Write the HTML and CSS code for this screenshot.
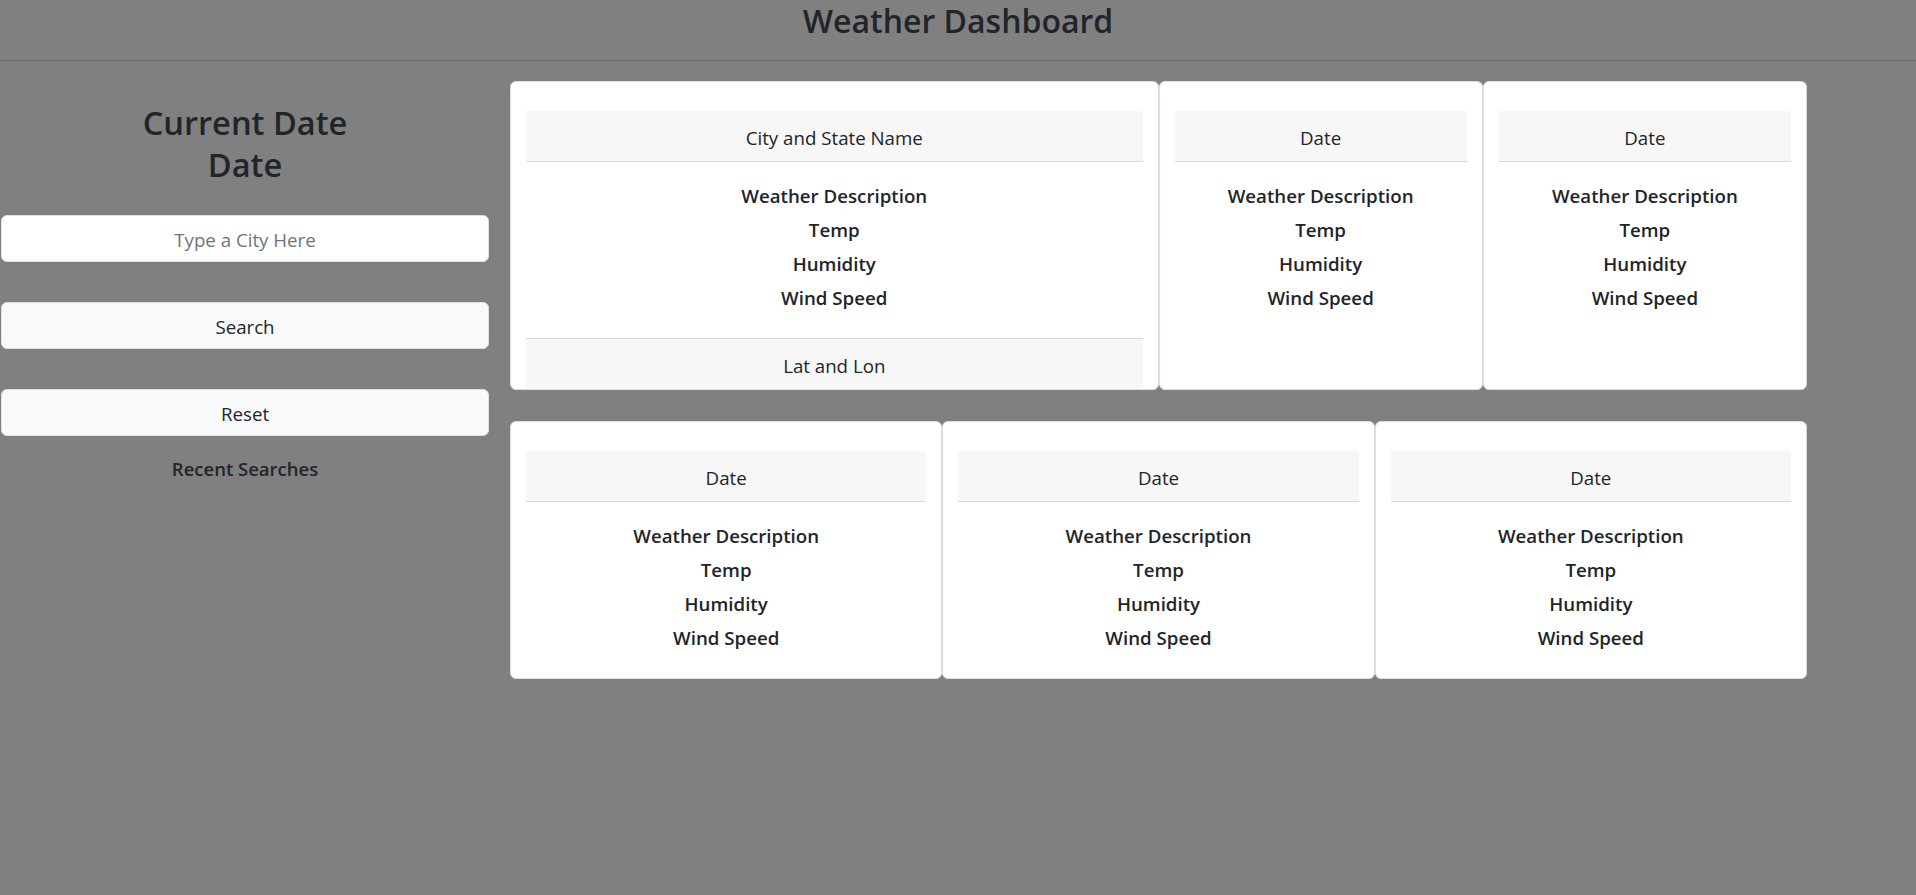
FILE: index.html
```html
<!DOCTYPE html>
<html lang="en">
<head>
<meta charset="utf-8">
<title>Weather Dashboard</title>
<link rel="stylesheet" href="styles.css">
</head>
<body>
<header class="topbar">
  <h1 class="title">Weather Dashboard</h1>
</header>
<main class="layout">
  <aside class="sidebar">
    <h2 class="date-heading"><span>Current Date</span><span>Date</span></h2>
    <input class="city-input" type="text" placeholder="Type a City Here">
    <button class="side-btn" type="button">Search</button>
    <button class="side-btn" type="button">Reset</button>
    <p class="recent">Recent Searches</p>
  </aside>
  <section class="cards">
    <div class="card-row card-row-top">
      <div class="card card-wide">
        <div class="card-head">City and State Name</div>
        <div class="card-body">
          <p class="stat">Weather Description</p>
          <p class="stat">Temp</p>
          <p class="stat">Humidity</p>
          <p class="stat">Wind Speed</p>
        </div>
        <div class="card-foot">Lat and Lon</div>
      </div>
      <div class="card">
        <div class="card-head">Date</div>
        <div class="card-body">
          <p class="stat">Weather Description</p>
          <p class="stat">Temp</p>
          <p class="stat">Humidity</p>
          <p class="stat">Wind Speed</p>
        </div>
      </div>
      <div class="card">
        <div class="card-head">Date</div>
        <div class="card-body">
          <p class="stat">Weather Description</p>
          <p class="stat">Temp</p>
          <p class="stat">Humidity</p>
          <p class="stat">Wind Speed</p>
        </div>
      </div>
    </div>
    <div class="card-row card-row-bottom">
      <div class="card">
        <div class="card-head">Date</div>
        <div class="card-body">
          <p class="stat">Weather Description</p>
          <p class="stat">Temp</p>
          <p class="stat">Humidity</p>
          <p class="stat">Wind Speed</p>
        </div>
      </div>
      <div class="card">
        <div class="card-head">Date</div>
        <div class="card-body">
          <p class="stat">Weather Description</p>
          <p class="stat">Temp</p>
          <p class="stat">Humidity</p>
          <p class="stat">Wind Speed</p>
        </div>
      </div>
      <div class="card">
        <div class="card-head">Date</div>
        <div class="card-body">
          <p class="stat">Weather Description</p>
          <p class="stat">Temp</p>
          <p class="stat">Humidity</p>
          <p class="stat">Wind Speed</p>
        </div>
      </div>
    </div>
  </section>
</main>
</body>
</html>
```

FILE: styles.css
```css
* {
  box-sizing: border-box;
}

html, body {
  margin: 0;
  padding: 0;
}

body {
  background: #808080;
  color: #212529;
  font-family: "Open Sans", "Noto Sans", "Liberation Sans", sans-serif;
  font-size: 18.7px;
  line-height: 24px;
  min-height: 895px;
}

.topbar {
  height: 61px;
  border-bottom: 1px solid #6a6a6a;
  text-align: center;
}

.title {
  margin: 0;
  font-size: 32px;
  line-height: 42px;
  font-weight: 600;
}

.layout {
  display: flex;
  align-items: flex-start;
}

.sidebar {
  width: 490px;
  flex: none;
  display: flex;
  flex-direction: column;
  align-items: center;
}

.date-heading {
  margin: 41px 0 0;
  font-size: 32.6px;
  line-height: 42px;
  font-weight: 600;
  display: flex;
  flex-direction: column;
  align-items: center;
}

.city-input {
  margin-top: 29px;
  width: 488px;
  height: 47px;
  border: 1px solid #dee2e6;
  border-radius: 6px;
  background: #fff;
  font-family: inherit;
  font-size: 18.7px;
  color: #212529;
  text-align: center;
  padding: 2px 12px 0;
  outline: none;
}

.city-input::placeholder {
  color: #6c757d;
  opacity: 1;
}

.side-btn {
  margin-top: 40px;
  width: 488px;
  height: 47px;
  border: 1px solid #dde0e4;
  border-radius: 6px;
  background: #f8f9fa;
  color: #212529;
  font-family: inherit;
  font-size: 18.7px;
  padding: 2px 0 0;
  cursor: pointer;
}

.recent {
  margin: 21px 0 0;
  font-weight: 600;
  font-size: 18.5px;
  line-height: 24px;
}

.cards {
  margin-left: 20px;
  width: 1297px;
  padding-top: 20px;
}

.card-row {
  display: grid;
}

.card-row-top {
  grid-template-columns: 2fr 1fr 1fr;
}

.card-row-bottom {
  grid-template-columns: 1fr 1fr 1fr;
  margin-top: 31px;
}

.card {
  background: #fff;
  border: 1px solid #dcdde2;
  border-radius: 6px;
  padding: 29px 15px 0;
  display: flex;
  flex-direction: column;
}

.card-head {
  height: 51px;
  padding-top: 4px;
  line-height: 46px;
  background: #f7f7f7;
  border-bottom: 1px solid #d8d8d8;
  text-align: center;
}

.card-body {
  padding: 22px 0 28px;
  display: flex;
  flex-direction: column;
  gap: 10px;
  text-align: center;
}

.stat {
  margin: 0;
  font-weight: 600;
  line-height: 24px;
}

.card-foot {
  height: 51px;
  padding-top: 3px;
  line-height: 47px;
  background: #f7f7f7;
  border-top: 1px solid #d8d8d8;
  text-align: center;
}
```
